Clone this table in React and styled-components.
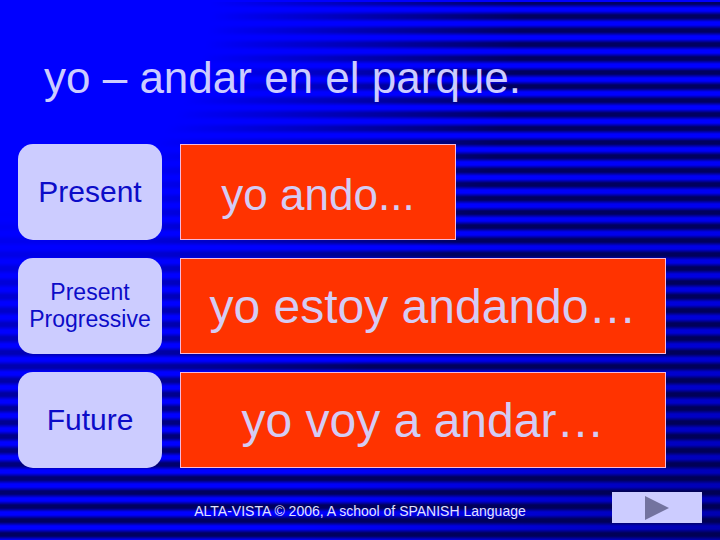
import styled, { createGlobalStyle } from "styled-components";

const GlobalStyle = createGlobalStyle`
  * { box-sizing: border-box; }
  body {
    margin: 0;
    background: #0000ff;
    font-family: "Liberation Sans", Arial, sans-serif;
  }
`;

//styles
const Slide = styled.div`
  position: relative;
  width: 720px;
  height: 540px;
  overflow: hidden;
  padding: 0 18px;
  background-color: #0000ff;

  &::before {
    content: "";
    position: absolute;
    inset: 0;
    background: repeating-linear-gradient(
      to bottom,
      rgba(0, 0, 96, 1) 0px,
      rgba(0, 0, 96, 1) 2px,
      rgba(0, 0, 96, 0) 6px,
      rgba(0, 0, 96, 0) 9px,
      rgba(0, 0, 96, 1) 13px,
      rgba(0, 0, 96, 1) 14px
    );
    background-position: 0 2px;
    -webkit-mask-image: radial-gradient(circle at 0 0, transparent 210px, black 520px);
    mask-image: radial-gradient(circle at 0 0, transparent 210px, black 520px);
  }

  &::after {
    content: "";
    position: absolute;
    inset: 0;
    background: radial-gradient(circle at 100% 100%, rgba(0, 0, 70, 0.45) 0px, rgba(0, 0, 70, 0) 420px);
  }
`;

const Content = styled.div`
  position: relative;
  z-index: 1;
`;

const Title = styled.h1`
  margin: 0;
  padding: 56px 0 0 26px;
  height: 100px;
  font-size: 44px;
  line-height: 44px;
  font-weight: normal;
  color: #ccccff;
  white-space: nowrap;
`;

const Rows = styled.div`
  display: flex;
  flex-direction: column;
  gap: 18px;
  margin-top: 44px;
`;

const Row = styled.div`
  display: flex;
  gap: 18px;
  height: 96px;
`;

const Tense = styled.div`
  width: 144px;
  border-radius: 15px;
  background: #ccccff;
  display: flex;
  align-items: center;
  justify-content: center;
  text-align: center;
  color: #0c0cc8;
  font-size: ${(props) => props.size}px;
  line-height: ${(props) => (props.size < 25 ? "27px" : "normal")};
`;

const Answer = styled.div`
  width: ${(props) => props.width}px;
  background: #ff3300;
  border: 1px solid #f4b8dc;
  display: flex;
  align-items: center;
  justify-content: center;
  color: #d4ccf4;
  font-size: ${(props) => props.size}px;
  padding-top: ${(props) => props.shift || 0}px;
  white-space: nowrap;
`;

const Footer = styled.div`
  display: grid;
  grid-template-columns: 1fr auto 1fr;
  margin-top: 24px;
  height: 31px;
`;

const Credit = styled.div`
  grid-column: 2;
  align-self: end;
  margin-bottom: 5px;
  font-size: 14px;
  line-height: 14px;
  color: #e2e2ff;
  white-space: nowrap;
`;

const NextButton = styled.div`
  grid-column: 3;
  justify-self: end;
  width: 90px;
  height: 31px;
  background: #ccccff;
  display: flex;
  align-items: center;
  justify-content: center;
`;

const rows = [
  { tense: "Present", tenseSize: 30, answer: "yo ando...", width: 276, size: 44, shift: 6 },
  { tense: "Present\nProgressive", tenseSize: 23, answer: "yo estoy andando…", width: 486, size: 48 },
  { tense: "Future", tenseSize: 30, answer: "yo voy a andar…", width: 486, size: 48 },
];

const App = () => {
  return (
    <>
      <GlobalStyle />
      <Slide>
        <Content>
          <Title>yo – andar en el parque.</Title>
          <Rows>
            {rows.map((row) => (
              <Row key={row.answer}>
                <Tense size={row.tenseSize}>
                  <span>
                    {row.tense.split("\n").map((line, i) => (
                      <div key={i}>{line}</div>
                    ))}
                  </span>
                </Tense>
                <Answer width={row.width} size={row.size} shift={row.shift}>
                  {row.answer}
                </Answer>
              </Row>
            ))}
          </Rows>
          <Footer>
            <Credit>ALTA-VISTA © 2006, A school of SPANISH Language</Credit>
            <NextButton>
              <svg width="24" height="24" viewBox="0 0 24 24">
                <polygon points="0,0 24,12 0,24" fill="#73739f" />
              </svg>
            </NextButton>
          </Footer>
        </Content>
      </Slide>
    </>
  );
};

export default App;
